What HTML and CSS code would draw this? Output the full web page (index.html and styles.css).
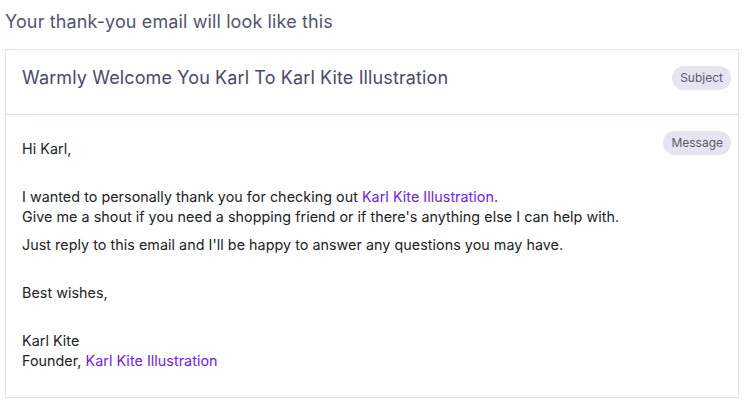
FILE: index.html
```html
<!DOCTYPE html>
<html lang="en">
<head>
<meta charset="utf-8">
<title>Thank-you email preview</title>
<link rel="stylesheet" href="styles.css">
</head>
<body>
<div class="preview">
  <h2 class="preview-title">Your thank-you email will look like this</h2>
  <div class="email-card">
    <div class="email-row email-subject">
      <div class="subject-text">Warmly Welcome You Karl To Karl Kite Illustration</div>
      <span class="tag">Subject</span>
    </div>
    <div class="email-row email-message">
      <div class="message-body">
        <p>Hi Karl,<br><br></p>
        <p>I wanted to personally thank you for checking out <a href="#" class="link">Karl Kite Illustration</a>.<br>Give me a shout if you need a shopping friend or if there's anything else I can help with.</p>
        <p>Just reply to this email and I'll be happy to answer any questions you may have.<br><br></p>
        <p>Best wishes,<br><br></p>
        <p>Karl Kite<br>Founder, <a href="#" class="link">Karl Kite Illustration</a></p>
      </div>
      <span class="tag">Message</span>
    </div>
  </div>
</div>
</body>
</html>
```

FILE: styles.css
```css
html, body {
  margin: 0;
  padding: 0;
  background: #ffffff;
}

body {
  font-family: Inter, "Noto Sans", "Liberation Sans", sans-serif;
  -webkit-font-smoothing: antialiased;
}

.preview {
  padding: 0 11px 0 5px;
}

.preview-title {
  margin: 10px 0 15px;
  font-size: 18px;
  line-height: 24px;
  font-weight: 400;
  letter-spacing: 0.12px;
  color: #55536c;
}

.email-card {
  border: 1px solid #e3e1ef;
  background: #fff;
}

.email-row {
  display: flex;
  align-items: flex-start;
  justify-content: space-between;
  gap: 16px;
}

.email-subject {
  padding: 16px 7px 24px 16px;
  border-bottom: 1px solid #e3e1ef;
}

.subject-text {
  font-size: 18px;
  line-height: 24px;
  letter-spacing: 0.12px;
  color: #4b4968;
}

.email-message {
  padding: 16px 7px 18px 16px;
}

.message-body {
  padding-top: 8px;
  font-size: 14.3px;
  line-height: 20px;
  letter-spacing: 0.05px;
  color: #222224;
}

.message-body p {
  margin: 0 0 8px;
}

.link {
  color: #6a22f2;
  text-decoration: none;
}

.tag {
  flex: none;
  height: 24px;
  line-height: 24px;
  padding: 0 8px;
  border-radius: 12px;
  background: #e6e4f0;
  color: #5c5a70;
  font-size: 12px;
}
```
